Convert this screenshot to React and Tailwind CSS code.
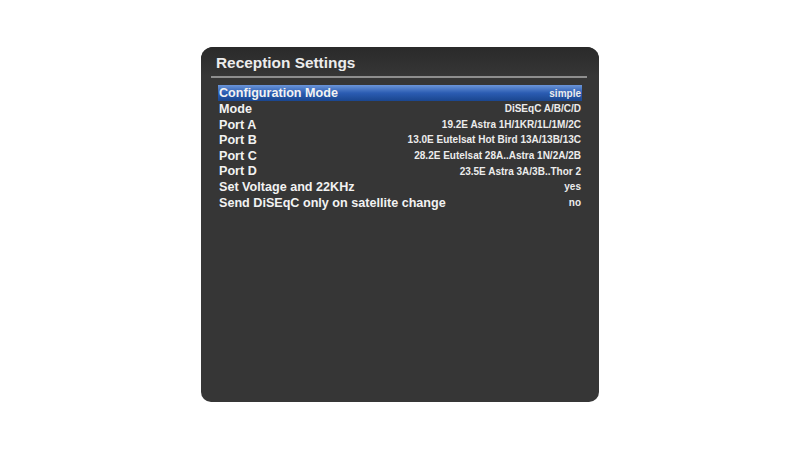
const rows = [
  { label: "Configuration Mode", value: "simple", active: true },
  { label: "Mode", value: "DiSEqC A/B/C/D" },
  { label: "Port A", value: "19.2E Astra 1H/1KR/1L/1M/2C" },
  { label: "Port B", value: "13.0E Eutelsat Hot Bird 13A/13B/13C" },
  { label: "Port C", value: "28.2E Eutelsat 28A..Astra 1N/2A/2B" },
  { label: "Port D", value: "23.5E Astra 3A/3B..Thor 2" },
  { label: "Set Voltage and 22KHz", value: "yes" },
  { label: "Send DiSEqC only on satellite change", value: "no" },
];

const App = () => {
  return (
    <div className="w-[800px] h-[450px] bg-white pt-[47px] pl-[201px] font-['Liberation_Sans',Arial,sans-serif]">
      <div className="w-[398px] h-[355px] rounded-t-[12px] rounded-b-[10px] bg-[#363636] overflow-hidden">
        {/* Header */}
        <div className="h-[29px] flex items-center pl-[15px] pt-[2px] bg-linear-to-b from-[#2a2a2a] to-[#363636]">
          <span className="text-[15.4px] font-bold text-[#ececec] leading-none">Reception Settings</span>
        </div>
        <div className="ml-[10px] mr-[12px] h-[2px] bg-[#8e8e8e]" />

        {/* Settings list */}
        <div className="mt-[7px] px-[17px]">
          {rows.map((row) => (
            <div
              key={row.label}
              className={
                row.active
                  ? "h-[16px] flex items-center justify-between px-[1px] pt-[1px] bg-linear-to-b from-[#6b95d8] via-[#2b5cb2] to-[#1a468f]"
                  : "h-[15.6px] flex items-center justify-between px-[1px] pt-[1px]"
              }
            >
              <span className="text-[12.6px] font-bold text-[#f2f2f2] leading-none whitespace-nowrap">{row.label}</span>
              <span className="text-[10px] font-bold text-[#ececec] leading-none whitespace-nowrap">{row.value}</span>
            </div>
          ))}
        </div>
      </div>
    </div>
  );
};

export default App;
